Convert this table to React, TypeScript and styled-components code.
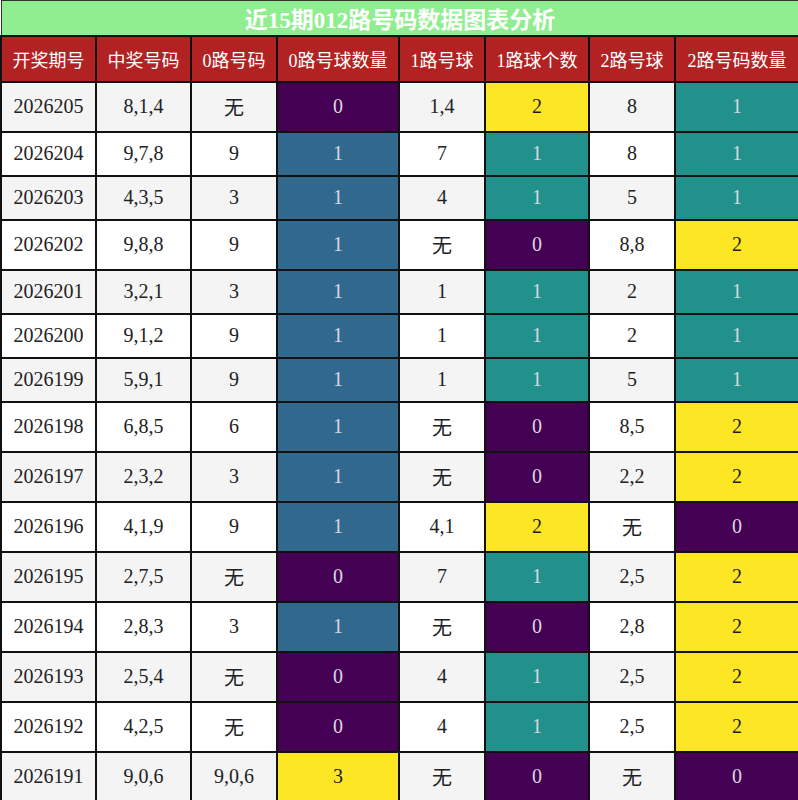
import React from "react";
import styled, { createGlobalStyle } from "styled-components";

const GlobalStyle = createGlobalStyle`
  html, body { margin: 0; padding: 0; background: #fff; }
  body { font-family: "Liberation Serif", "Noto Sans CJK SC", serif; }
`;

const Table = styled.table`
  width: 798px;
  table-layout: fixed;
  border-collapse: collapse;
  font-family: "Liberation Serif", "Noto Sans CJK SC", serif;
`;

const TitleCell = styled.th`
  background: #90ee90;
  color: #fff;
  font-size: 23px;
  font-weight: bold;
  padding: 0;
  border: 1px solid #333;
  text-align: center;
`;

const HeadCell = styled.th`
  background: #b22222;
  color: #fff;
  font-size: 18px;
  font-weight: normal;
  padding: 9px 2px;
  border: 2px solid #111;
  text-align: center;
  white-space: nowrap;
`;

const Row = styled.tr<{ $stripe: boolean }>`
  background: ${(p) => (p.$stripe ? "#f4f4f4" : "#ffffff")};
`;

const Cell = styled.td`
  font-size: 20px;
  color: #222;
  padding: 9px 2px 10px;
  border: 2px solid #111;
  text-align: center;
  white-space: nowrap;
`;

const HeatCell = styled(Cell)<{ $bg: string; $dark: boolean }>`
  background: ${(p) => p.$bg};
  color: ${(p) => (p.$dark ? "#dcd6e0" : "#1a1a1a")};
`;

const widths = [95, 95, 86, 122, 86, 104, 86, 124];
const headers = ["开奖期号", "中奖号码", "0路号码", "0路号球数量", "1路号球", "1路球个数", "2路号球", "2路号码数量"];

type R = [string, string, string, number, string, number, string, number];
const rows: R[] = [
  ["2026205", "8,1,4", "无", 0, "1,4", 2, "8", 1],
  ["2026204", "9,7,8", "9", 1, "7", 1, "8", 1],
  ["2026203", "4,3,5", "3", 1, "4", 1, "5", 1],
  ["2026202", "9,8,8", "9", 1, "无", 0, "8,8", 2],
  ["2026201", "3,2,1", "3", 1, "1", 1, "2", 1],
  ["2026200", "9,1,2", "9", 1, "1", 1, "2", 1],
  ["2026199", "5,9,1", "9", 1, "1", 1, "5", 1],
  ["2026198", "6,8,5", "6", 1, "无", 0, "8,5", 2],
  ["2026197", "2,3,2", "3", 1, "无", 0, "2,2", 2],
  ["2026196", "4,1,9", "9", 1, "4,1", 2, "无", 0],
  ["2026195", "2,7,5", "无", 0, "7", 1, "2,5", 2],
  ["2026194", "2,8,3", "3", 1, "无", 0, "2,8", 2],
  ["2026193", "2,5,4", "无", 0, "4", 1, "2,5", 2],
  ["2026192", "4,2,5", "无", 0, "4", 1, "2,5", 2],
  ["2026191", "9,0,6", "9,0,6", 3, "无", 0, "无", 0],
];

function viridis(t: number): string {
  if (t <= 0) return "#440154";
  if (t < 0.4) return "#31688e";
  if (t < 0.9) return "#21918c";
  return "#fde725";
}

function Heat({ value, max }: { value: number; max: number }) {
  const t = value / max;
  return (
    <HeatCell $bg={viridis(t)} $dark={t < 0.9}>
      {value}
    </HeatCell>
  );
}

export default function App() {
  return (
    <>
      <GlobalStyle />
      <Table>
        <colgroup>
          {widths.map((w, i) => (
            <col key={i} style={{ width: w }} />
          ))}
        </colgroup>
        <thead>
          <tr>
            <TitleCell colSpan={8}>近15期012路号码数据图表分析</TitleCell>
          </tr>
          <tr>
            {headers.map((h) => (
              <HeadCell key={h}>{h}</HeadCell>
            ))}
          </tr>
        </thead>
        <tbody>
          {rows.map((r, i) => (
            <Row key={r[0]} $stripe={i % 2 === 0}>
              <Cell>{r[0]}</Cell>
              <Cell>{r[1]}</Cell>
              <Cell>{r[2]}</Cell>
              <Heat value={r[3]} max={3} />
              <Cell>{r[4]}</Cell>
              <Heat value={r[5]} max={2} />
              <Cell>{r[6]}</Cell>
              <Heat value={r[7]} max={2} />
            </Row>
          ))}
        </tbody>
      </Table>
    </>
  );
}
